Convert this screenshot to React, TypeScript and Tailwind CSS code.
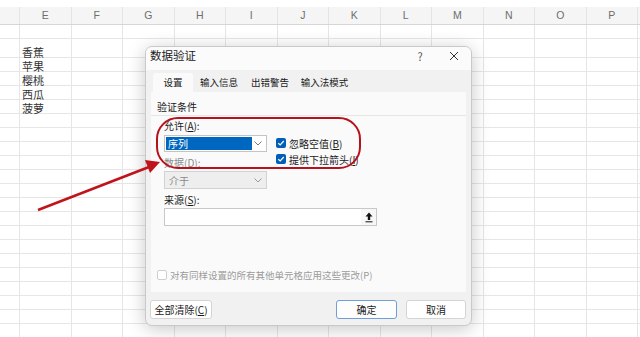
const cols = ["E", "F", "G", "H", "I", "J", "K", "L", "M", "N", "O", "P"];
const fruits = ["香蕉", "苹果", "樱桃", "西瓜", "菠萝"];
const rowCount = 22;

const font = { fontFamily: '"Noto Sans CJK SC", "Noto Sans", sans-serif' };
const cellFont = { fontFamily: '"Liberation Sans", "Noto Sans CJK SC", sans-serif' };

const Chevron = ({ color = "#7a7a7a" }: { color?: string }) => (
  <svg width="8" height="5" viewBox="0 0 8 5" fill="none">
    <path d="M0.5 0.5L4 4L7.5 0.5" stroke={color} strokeWidth="1" />
  </svg>
);

const Check = () => (
  <span className="flex h-[10px] w-[10px] items-center justify-center rounded-[2px] bg-[#005fb8]">
    <svg width="8" height="8" viewBox="0 0 8 8" fill="none">
      <path d="M1.3 4.2L3.2 6L6.8 2" stroke="white" strokeWidth="1.2" />
    </svg>
  </span>
);

const Sheet = () => (
  <div className="flex flex-col" style={cellFont}>
    <div className="h-[7px] bg-white" />
    <div className="grid h-[18px] grid-cols-[20px_repeat(12,51.5px)_1fr] border-b border-[#d6d6d6] bg-[#f5f5f5]">
      <div className="border-r border-[#e4e4e4]" />
      {cols.map((c) => (
        <div key={c} className="flex items-center justify-center border-r border-[#e4e4e4] text-[10.5px] text-[#6e6e6e]">
          {c}
        </div>
      ))}
      <div />
    </div>
    {Array.from({ length: rowCount }).map((_, i) => (
      <div
        key={i}
        className={`grid grid-cols-[20px_repeat(12,51.5px)_1fr] ${i === 1 ? "h-[19px]" : "h-[14px]"}`}
      >
        <div className="border-r border-b border-[#e6e6e6]" />
        {cols.map((c) => (
          <div key={c} className="flex items-end border-r border-b border-[#e6e6e6] pl-[2px] text-[11px] leading-[7px] text-[#333]">
            {c === "E" && i >= 1 && i <= 5 ? fruits[i - 1] : ""}
          </div>
        ))}
        <div className="border-b border-[#e6e6e6]" />
      </div>
    ))}
  </div>
);

const Dialog = () => (
  <div className="absolute left-[145px] top-[46px] flex h-[280px] w-[327px] flex-col overflow-hidden rounded-[7px] border border-[#c9c9c9] bg-[#f1f1f1] shadow-[0_3px_18px_rgba(0,0,0,0.22)]">
    <div className="flex h-[23px] items-center bg-[#fbfbfb] pb-[5px] pl-[4px] pr-[5px]">
      <span className="text-[11.5px] text-[#1a1a1a]">数据验证</span>
      <span className="ml-auto w-[20px] text-center text-[11px] text-[#555]">?</span>
      <span className="ml-[12px] flex w-[24px] justify-center">
        <svg width="10" height="10" viewBox="0 0 10 10">
          <path d="M1 1L9 9M9 1L1 9" stroke="#333" strokeWidth="1" />
        </svg>
      </span>
    </div>
    <div className="flex h-[22px] items-end pl-[7px] text-[9.5px] text-[#1a1a1a]">
      <div className="flex h-[19px] w-[40px] items-center justify-center rounded-t-[3px] bg-[#fafafa]">设置</div>
      <div className="flex h-[19px] w-[52px] items-center justify-center">输入信息</div>
      <div className="flex h-[19px] w-[50px] items-center justify-center">出错警告</div>
      <div className="flex h-[19px] w-[59px] items-center justify-center">输入法模式</div>
    </div>
    <div className="mx-[5px] flex h-[200px] flex-col bg-[#fafafa] pt-[9px] text-[10px] text-[#1a1a1a]">
      <div className="px-[6px] leading-[12px]">验证条件</div>
      <div className="mt-[2px] h-px bg-[#e6e6e6]" />
      <div className="ml-[13px] mt-[4px] flex">
        <div className="w-[103px]">
          <div className="leading-[12px]">
            允许(<u>A</u>):
          </div>
          <div className="mt-[3px] flex h-[17px] items-center border border-[#c4c4c4] bg-white pl-[1px] pr-[4px]">
            <div className="flex h-[13px] w-[86px] items-center bg-[#0067c0] pl-[2px] text-white">序列</div>
            <span className="ml-auto">
              <Chevron />
            </span>
          </div>
          <div className="mt-[5px] leading-[12px] text-[#8c8c8c]">
            数据(<u>D</u>):
          </div>
          <div className="mt-[2px] flex h-[18px] items-center border border-[#d2d2d2] bg-[#eeeeee] pl-[4px] pr-[4px] text-[#8a8a8a]">
            介于
            <span className="ml-auto">
              <Chevron color="#9a9a9a" />
            </span>
          </div>
        </div>
        <div className="ml-[9px] flex flex-col gap-[4px] pt-[17px]">
          <div className="flex h-[12px] items-center gap-[3px]">
            <Check />
            <span>
              忽略空值(<u>B</u>)
            </span>
          </div>
          <div className="flex h-[12px] items-center gap-[3px]">
            <Check />
            <span>
              提供下拉箭头(<u>I</u>)
            </span>
          </div>
        </div>
      </div>
      <div className="ml-[13px] mt-[5px] leading-[12px]">
        来源(<u>S</u>):
      </div>
      <div className="ml-[13px] mt-[2px] flex h-[18px] w-[213px] items-center border border-[#c8c8c8] bg-white">
        <div className="ml-auto flex h-[16px] w-[15px] items-center justify-center bg-[#f7f7f7]">
          <svg width="8" height="11" viewBox="0 0 8 11">
            <path d="M4 0.5L7.5 4.5H5.2V8H2.8V4.5H0.5Z" fill="#111" />
            <rect x="0.5" y="9.3" width="7" height="1" fill="#111" />
          </svg>
        </div>
      </div>
      <div className="mb-[11px] ml-[6px] mt-auto flex h-[12px] items-center gap-[3px] text-[9.5px] text-[#9a9a9a]">
        <span className="h-[10px] w-[10px] rounded-[2px] border border-[#cfcfcf] bg-white" />
        对有同样设置的所有其他单元格应用这些更改(P)
      </div>
    </div>
    <div className="mt-[8px] flex h-[19px] pl-[4px] pr-[5px] text-[10px] text-[#1a1a1a]">
      <button className="flex w-[62px] items-center justify-center rounded-[3px] border border-[#d4d4d4] bg-white">
        全部清除(<u>C</u>)
      </button>
      <button className="ml-auto flex w-[61px] items-center justify-center rounded-[3px] border border-[#6f9fd6] bg-[#fdfdfd]">
        确定
      </button>
      <button className="ml-[9px] flex w-[60px] items-center justify-center rounded-[3px] border border-[#d4d4d4] bg-white">
        取消
      </button>
    </div>
  </div>
);

export default function App() {
  return (
    <div className="relative h-[337px] w-[640px] overflow-hidden bg-white" style={font}>
      <Sheet />
      <Dialog />
      <div className="absolute left-[156px] top-[117px] h-[52px] w-[205px] rounded-[22px] border-2 border-[#b5121b]" />
      <svg className="absolute left-0 top-0" width="640" height="337" viewBox="0 0 640 337">
        <line x1="38" y1="210" x2="149" y2="167" stroke="#c0141c" strokeWidth="2.5" />
        <polygon points="160,162 145,160 150,173" fill="#c0141c" />
      </svg>
    </div>
  );
}
